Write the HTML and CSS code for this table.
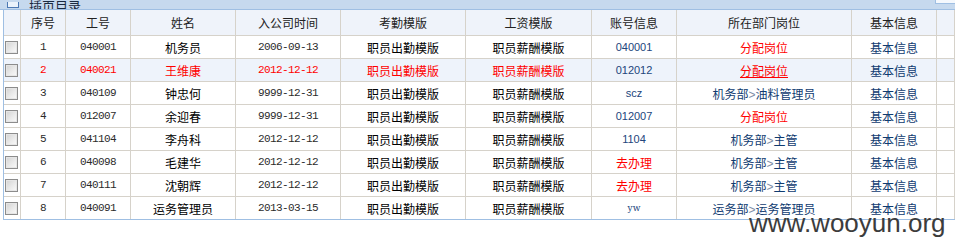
FILE: index.html
```html
<!DOCTYPE html>
<html lang="zh-CN">
<head>
<meta charset="utf-8">
<title>员工列表</title>
<link rel="stylesheet" href="styles.css">
</head>
<body>
<div class="page">
  <div class="titlebar">
    <span class="ticon"></span>
    <span class="ttitle">插页目录</span>
    <span class="tbtn"></span>
  </div>
  <div class="panel">
    <table class="grid">
      <thead>
        <tr>
          <th class="c-chk"></th>
          <th class="c-no">序号</th>
          <th class="c-id">工号</th>
          <th class="c-name">姓名</th>
          <th class="c-date">入公司时间</th>
          <th class="c-att">考勤模版</th>
          <th class="c-pay">工资模版</th>
          <th class="c-acct">账号信息</th>
          <th class="c-dept">所在部门岗位</th>
          <th class="c-info">基本信息</th>
          <th class="c-extra"></th>
        </tr>
      </thead>
      <tbody>
        <tr>
          <td><span class="chk"></span></td>
          <td class="num">1</td>
          <td class="num">040001</td>
          <td>机务员</td>
          <td class="num">2006-09-13</td>
          <td>职员出勤模版</td>
          <td>职员薪酬模版</td>
          <td class="acct">040001</td>
          <td><span class="red">分配岗位</span></td>
          <td class="link">基本信息</td>
          <td></td>
        </tr>
        <tr class="hl">
          <td><span class="chk"></span></td>
          <td class="num">2</td>
          <td class="num">040021</td>
          <td>王维康</td>
          <td class="num">2012-12-12</td>
          <td>职员出勤模版</td>
          <td>职员薪酬模版</td>
          <td class="acct">012012</td>
          <td><span class="red ul">分配岗位</span></td>
          <td class="link">基本信息</td>
          <td></td>
        </tr>
        <tr>
          <td><span class="chk"></span></td>
          <td class="num">3</td>
          <td class="num">040109</td>
          <td>钟忠何</td>
          <td class="num">9999-12-31</td>
          <td>职员出勤模版</td>
          <td>职员薪酬模版</td>
          <td class="acct">scz</td>
          <td class="link">机务部<span class="gt">&gt;</span>油料管理员</td>
          <td class="link">基本信息</td>
          <td></td>
        </tr>
        <tr>
          <td><span class="chk"></span></td>
          <td class="num">4</td>
          <td class="num">012007</td>
          <td>余迎春</td>
          <td class="num">9999-12-31</td>
          <td>职员出勤模版</td>
          <td>职员薪酬模版</td>
          <td class="acct">012007</td>
          <td><span class="red">分配岗位</span></td>
          <td class="link">基本信息</td>
          <td></td>
        </tr>
        <tr>
          <td><span class="chk"></span></td>
          <td class="num">5</td>
          <td class="num">041104</td>
          <td>李舟科</td>
          <td class="num">2012-12-12</td>
          <td>职员出勤模版</td>
          <td>职员薪酬模版</td>
          <td class="acct">1104</td>
          <td class="link">机务部<span class="gt">&gt;</span>主管</td>
          <td class="link">基本信息</td>
          <td></td>
        </tr>
        <tr>
          <td><span class="chk"></span></td>
          <td class="num">6</td>
          <td class="num">040098</td>
          <td>毛建华</td>
          <td class="num">2012-12-12</td>
          <td>职员出勤模版</td>
          <td>职员薪酬模版</td>
          <td><span class="red">去办理</span></td>
          <td class="link">机务部<span class="gt">&gt;</span>主管</td>
          <td class="link">基本信息</td>
          <td></td>
        </tr>
        <tr>
          <td><span class="chk"></span></td>
          <td class="num">7</td>
          <td class="num">040111</td>
          <td>沈朝辉</td>
          <td class="num">2012-12-12</td>
          <td>职员出勤模版</td>
          <td>职员薪酬模版</td>
          <td><span class="red">去办理</span></td>
          <td class="link">机务部<span class="gt">&gt;</span>主管</td>
          <td class="link">基本信息</td>
          <td></td>
        </tr>
        <tr>
          <td><span class="chk"></span></td>
          <td class="num">8</td>
          <td class="num">040091</td>
          <td>运务管理员</td>
          <td class="num">2013-03-15</td>
          <td>职员出勤模版</td>
          <td>职员薪酬模版</td>
          <td class="acct small">yw</td>
          <td class="link">运务部<span class="gt">&gt;</span>运务管理员</td>
          <td class="link">基本信息</td>
          <td></td>
        </tr>
      </tbody>
    </table>
  </div>
  <div class="watermark">www.wooyun.org</div>
</div>
</body>
</html>
```

FILE: styles.css
```css
html, body {
  margin: 0;
  padding: 0;
  background: #ffffff;
  overflow: hidden;
}

body {
  font-family: "Noto Sans CJK SC", "Noto Sans", sans-serif;
  font-size: 12px;
  color: #111;
}

.page {
  position: relative;
  width: 955px;
  height: 252px;
}

.titlebar {
  height: 9px;
  background: #c6d9ee;
  border-bottom: 1px solid #9fbfe3;
  display: flex;
  align-items: flex-end;
  overflow: hidden;
}

.ticon {
  width: 10px;
  height: 5px;
  margin-left: 7px;
  margin-bottom: 1px;
  border: 1px solid #4d79b3;
  border-top: 0;
  background: #eaf2fb;
}

.ttitle {
  margin-left: 10px;
  font-size: 13px;
  line-height: 13px;
  margin-bottom: -3px;
  color: #1a2a40;
}

.tbtn {
  margin-left: auto;
  width: 19px;
  height: 3px;
  align-self: flex-start;
  background: #f4f8fd;
  border: 1px solid #9fbfe3;
  border-top: 0;
  border-right: 0;
}

.panel {
  margin-left: 3px;
  border-left: 1px solid #9fbfe3;
  border-bottom: 1px solid #9fbfe3;
  width: 951px;
}

.grid {
  border-collapse: separate;
  border-spacing: 0;
  table-layout: fixed;
  width: 951px;
}

.grid th,
.grid td {
  box-sizing: border-box;
  padding: 0;
  border-right: 1px solid #d6d2ca;
  border-bottom: 1px solid #d6d2ca;
  text-align: center;
  vertical-align: middle;
  white-space: nowrap;
  overflow: hidden;
  font-weight: normal;
}

.grid th {
  height: 26px;
  background: #eff3fa;
  color: #222;
}

.grid td {
  height: 23px;
  color: #000;
}

.grid tbody tr:last-child td {
  border-bottom: 0;
  height: 22px;
}

.grid tr.hl td {
  background: #eef3fb;
  color: #ff0000;
}

.c-chk { width: 17px; }
.c-no { width: 45px; }
.c-id { width: 65px; }
.c-name { width: 105px; }
.c-date { width: 105px; }
.c-att { width: 125px; }
.c-pay { width: 126px; }
.c-acct { width: 85px; }
.c-dept { width: 175px; }
.c-info { width: 85px; }
.c-extra { width: auto; }

.chk {
  display: block;
  width: 11px;
  height: 11px;
  margin-left: 1px;
  border: 1px solid #8c8c8c;
  background: linear-gradient(135deg, #d2d2d2 0%, #ececec 60%, #fafafa 100%);
  box-shadow: inset 0 0 0 1px #e6e6e6;
}

.grid td.num {
  font-family: "Liberation Mono", "DejaVu Sans Mono", monospace;
  font-size: 11px;
  letter-spacing: -0.6px;
  color: #2b2b2b;
}

.grid tr.hl td.num {
  color: #ff0000;
}

.grid td.acct,
.grid tr.hl td.acct {
  font-family: "Liberation Sans", "DejaVu Sans", sans-serif;
  font-size: 11px;
  color: #22457c;
}

.grid td.acct.small {
  font-family: "DejaVu Serif", serif;
  font-size: 9px;
}

.grid td.link,
.grid tr.hl td.link {
  color: #0f3b70;
}

.gt {
  color: #7d8ea6;
  font-family: "Liberation Sans", sans-serif;
}

.red {
  color: #ff0000;
}

.ul {
  text-decoration: underline;
}

.watermark {
  position: absolute;
  left: 749px;
  top: 210px;
  font-family: "Liberation Sans", Arial, sans-serif;
  font-size: 26px;
  line-height: 26px;
  color: #3c3c3c;
}
```
